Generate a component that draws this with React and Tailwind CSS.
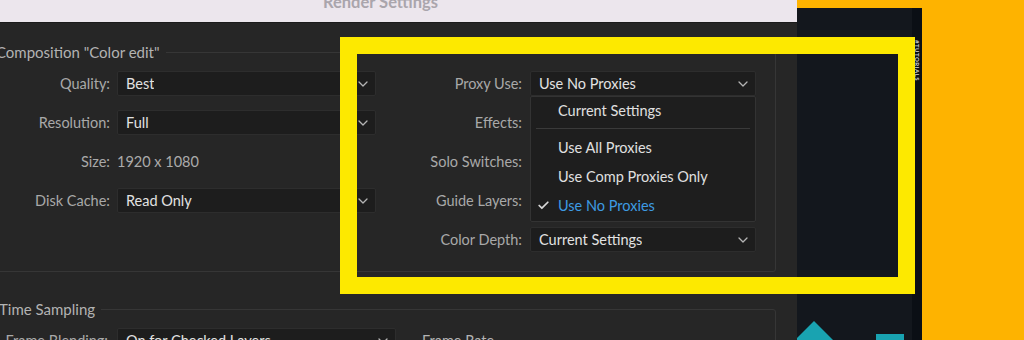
import { Check } from "lucide-react";

// Render Settings dialog (After Effects) with a yellow highlight around proxy options

const font = { fontFamily: "Lato, 'Open Sans', sans-serif" };

function Chevron() {
  return (
    <svg className="w-[10px] h-[6px] shrink-0" viewBox="0 0 10 6" fill="none" stroke="#b4b4b4" strokeWidth={1.3}>
      <path d="M1 1l4 4 4-4" strokeLinecap="round" strokeLinejoin="round" />
    </svg>
  );
}

function Dropdown({ value, className = "", children }) {
  return (
    <div className={`relative h-[25px] ${className}`}>
      <div className="h-full flex items-center justify-between pl-[8px] pr-[7px] bg-[#1d1d1d] border border-[#2d2d2d] rounded-[2px]">
        <span className="text-[#e2e2e2] truncate">{value}</span>
        <Chevron />
      </div>
      {children}
    </div>
  );
}

function Label({ children, className = "" }) {
  return <div className={`text-right text-[#a9a9a9] whitespace-nowrap ${className}`}>{children}</div>;
}

function ProxyMenu() {
  const items = ["Use All Proxies", "Use Comp Proxies Only", "Use No Proxies"];
  return (
    <div className="absolute left-0 top-full w-full bg-[#1e1e1e] border border-[#333] rounded-[2px] z-10 pb-[1px]">
      <div className="h-[28px] flex items-center pl-[27px] text-[#e0e0e0]">Current Settings</div>
      <div className="mx-[5px] mt-[3px] mb-[4px] h-px bg-[#3a3a3a]" />
      {items.map((it) => {
        const active = it === "Use No Proxies";
        return (
          <div key={it} className="h-[29px] flex items-center relative pl-[27px]">
            {active && (
              <Check className="absolute left-[6px] w-[13px] h-[13px] text-[#d8d8d8]" strokeWidth={3.2} />
            )}
            <span className={active ? "text-[#3d9be2]" : "text-[#e0e0e0]"}>{it}</span>
          </div>
        );
      })}
    </div>
  );
}

export default function App() {
  return (
    <div className="relative w-[1024px] h-[340px] overflow-hidden bg-[#feb300] flex text-[14.5px]" style={font}>
      {/* Dialog */}
      <div className="w-[797px] h-full flex flex-col bg-[#262626] shrink-0">
        {/* Title bar */}
        <div className="h-[23px] bg-[#ece6ed] border-b border-[#1b1b1b] flex justify-center pr-[36px] overflow-hidden shrink-0">
          <span className="text-[16.5px] font-bold leading-[18px] -mt-[7px] text-[#aaa5ac]">Render Settings</span>
        </div>

        <div className="flex-1 pt-[19px] pr-[21px]">
          {/* Composition group */}
          <fieldset className="-ml-[14px] border border-[#363636] rounded-[3px] pb-[12px]">
            <legend className="ml-[9px] pr-[6px] leading-[20px] text-[15px] text-[#b3b3b3]">Composition "Color edit"</legend>
            <div className="pt-[2px] grid grid-cols-[130px_259px_154px_226px] auto-rows-[39px] items-center">
              <Label className="pr-[7px]">Quality:</Label>
              <Dropdown value="Best" />
              <Label className="pr-[8px]">Proxy Use:</Label>
              <Dropdown value="Use No Proxies">
                <ProxyMenu />
              </Dropdown>

              <Label className="pr-[7px]">Resolution:</Label>
              <Dropdown value="Full" />
              <Label className="pr-[8px]">Effects:</Label>
              <div />

              <Label className="pr-[7px]">Size:</Label>
              <div className="text-[#ababab]">1920 x 1080</div>
              <Label className="pr-[8px]">Solo Switches:</Label>
              <div />

              <Label className="pr-[7px]">Disk Cache:</Label>
              <Dropdown value="Read Only" />
              <Label className="pr-[8px]">Guide Layers:</Label>
              <div />

              <div />
              <div />
              <Label className="pr-[8px]">Color Depth:</Label>
              <Dropdown value="Current Settings" />
            </div>
          </fieldset>

          {/* Time Sampling group */}
          <fieldset className="-ml-[14px] mt-[27px] border border-[#363636] rounded-[3px] pb-[12px]">
            <legend className="ml-[12px] pr-[6px] leading-[20px] text-[15px] text-[#b3b3b3]">Time Sampling</legend>
            <div className="pt-[9px] flex items-center">
              <Label className="w-[130px] pr-[9px]">Frame Blending:</Label>
              <Dropdown value="On for Checked Layers" className="w-[279px]" />
              <div className="ml-[26px] text-[#b3b3b3] self-start pt-[2px]">Frame Rate</div>
            </div>
          </fieldset>
        </div>
      </div>

      {/* Dark video strip */}
      <div className="w-[125px] mt-[8px] bg-[#13171d] flex shrink-0">
        <div className="flex-1 flex items-end">
          <svg className="w-[38px] h-[19px] shrink-0" viewBox="0 0 38 19">
            <polygon points="17,0 38,21 -4,21" fill="#19a3b1" />
          </svg>
          <div className="ml-[41px] w-[28px] h-[6px] bg-[#19a3b1]" />
        </div>
        <div className="w-[10px] bg-[#0b0f15] pt-[32px] flex justify-center">
          <span
            className="text-[6px] leading-[8px] font-bold tracking-[0.5px] text-[#d6d6d6] h-fit"
            style={{ writingMode: "vertical-rl" }}
          >
            #TUTORIALS
          </span>
        </div>
      </div>

      {/* Yellow highlight annotation */}
      <div className="absolute left-[340px] top-[37px] w-[575px] h-[257px] border-[17px] border-[#fde900] pointer-events-none z-20" />
    </div>
  );
}
